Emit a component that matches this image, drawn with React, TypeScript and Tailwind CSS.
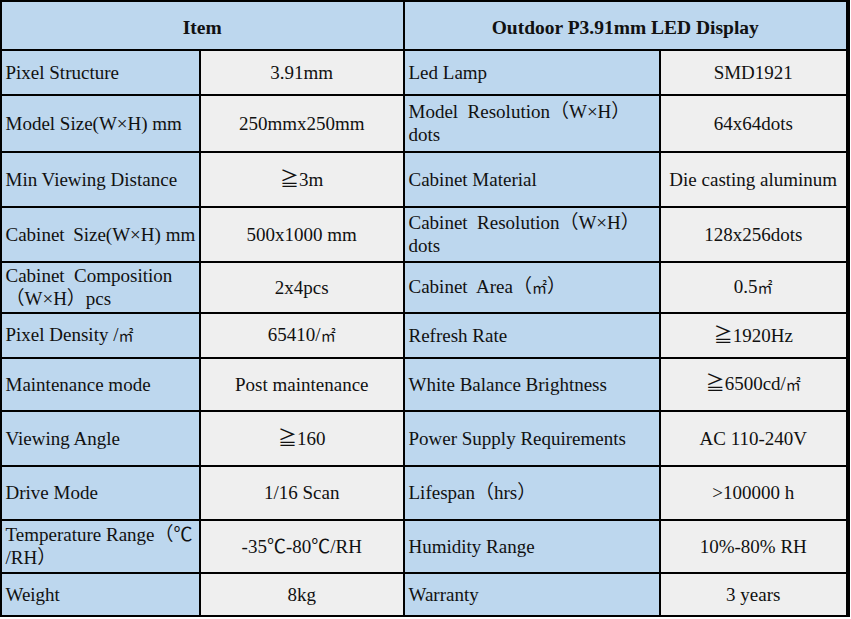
import { ReactNode } from "react";

type Row = {
  h: string;
  cells: [ReactNode, ReactNode, ReactNode, ReactNode];
};

// small square-metre sign, the CJK glyph runs large next to the serif text
const M2 = () => <span className="text-[15px]">㎡</span>;

// spec rows: label / value / label / value
const rows: Row[] = [
  { h: "h-[43.5px]", cells: ["Pixel Structure", "3.91mm", "Led Lamp", "SMD1921"] },
  {
    h: "h-[55.5px]",
    cells: [
      "Model Size(W×H) mm",
      "250mmx250mm",
      <>Model  Resolution（W×H）<br />dots</>,
      "64x64dots",
    ],
  },
  {
    h: "h-[53.5px]",
    cells: ["Min Viewing Distance", "≧3m", "Cabinet Material", "Die casting aluminum"],
  },
  {
    h: "h-[53.5px]",
    cells: [
      "Cabinet\u2009 Size(W×H) mm",
      "500x1000 mm",
      <>Cabinet  Resolution（W×H）<br />dots</>,
      "128x256dots",
    ],
  },
  {
    h: "h-[49.5px]",
    cells: [
      <>Cabinet  Composition<br />（W×H）pcs</>,
      "2x4pcs",
      <>Cabinet  Area（<M2 />）</>,
      <>0.5<M2 /></>,
    ],
  },
  {
    h: "h-[43.5px]",
    cells: [<>Pixel Density /<M2 /></>, <>65410/<M2 /></>, "Refresh Rate", "≧1920Hz"],
  },
  {
    h: "h-[51.5px]",
    cells: ["Maintenance mode", "Post maintenance", "White Balance Brightness", <>≧6500cd/<M2 /></>],
  },
  {
    h: "h-[53.5px]",
    cells: ["Viewing Angle", "≧160", "Power Supply Requirements", "AC 110-240V"],
  },
  { h: "h-[52.5px]", cells: ["Drive Mode", "1/16 Scan", "Lifespan（hrs）", ">100000 h"] },
  {
    h: "h-[51.5px]",
    cells: [
      <>Temperature Range（℃<br />/RH）</>,
      "-35℃-80℃/RH",
      "Humidity Range",
      "10%-80% RH",
    ],
  },
  { h: "h-[41.5px]", cells: ["Weight", "8kg", "Warranty", "3 years"] },
];

function Label({ children, h }: { children: ReactNode; h: string }) {
  return (
    <div className={`${h} flex items-center bg-[#bdd7ee] pl-[4px] leading-[23px] whitespace-pre`}>
      <div>{children}</div>
    </div>
  );
}

function Value({ children, h }: { children: ReactNode; h: string }) {
  return (
    <div className={`${h} flex items-center justify-center bg-[#efefef] text-center leading-[23px] whitespace-nowrap`}>
      <div>{children}</div>
    </div>
  );
}

export default function App() {
  return (
    <div className="w-[851px] h-[619px] bg-white">
      <div
        className="grid w-[849.5px] grid-cols-[197.5px_202.5px_254.5px_185.5px] gap-[1.5px] bg-black p-[1.5px] text-[19px] text-[#111]"
        style={{ fontFamily: '"Liberation Serif", "Noto Sans CJK SC", serif' }}
      >
        <div className="col-span-2 flex h-[47.5px] items-center justify-center bg-[#bdd7ee] pt-[4px] text-[19.5px] font-bold">
          Item
        </div>
        <div className="col-span-2 flex h-[47.5px] items-center justify-center bg-[#bdd7ee] pt-[4px] text-[19.5px] font-bold">
          Outdoor P3.91mm LED Display
        </div>
        {rows.map((r, i) => (
          <div key={i} className="contents">
            <Label h={r.h}>{r.cells[0]}</Label>
            <Value h={r.h}>{r.cells[1]}</Value>
            <Label h={r.h}>{r.cells[2]}</Label>
            <Value h={r.h}>{r.cells[3]}</Value>
          </div>
        ))}
      </div>
    </div>
  );
}
